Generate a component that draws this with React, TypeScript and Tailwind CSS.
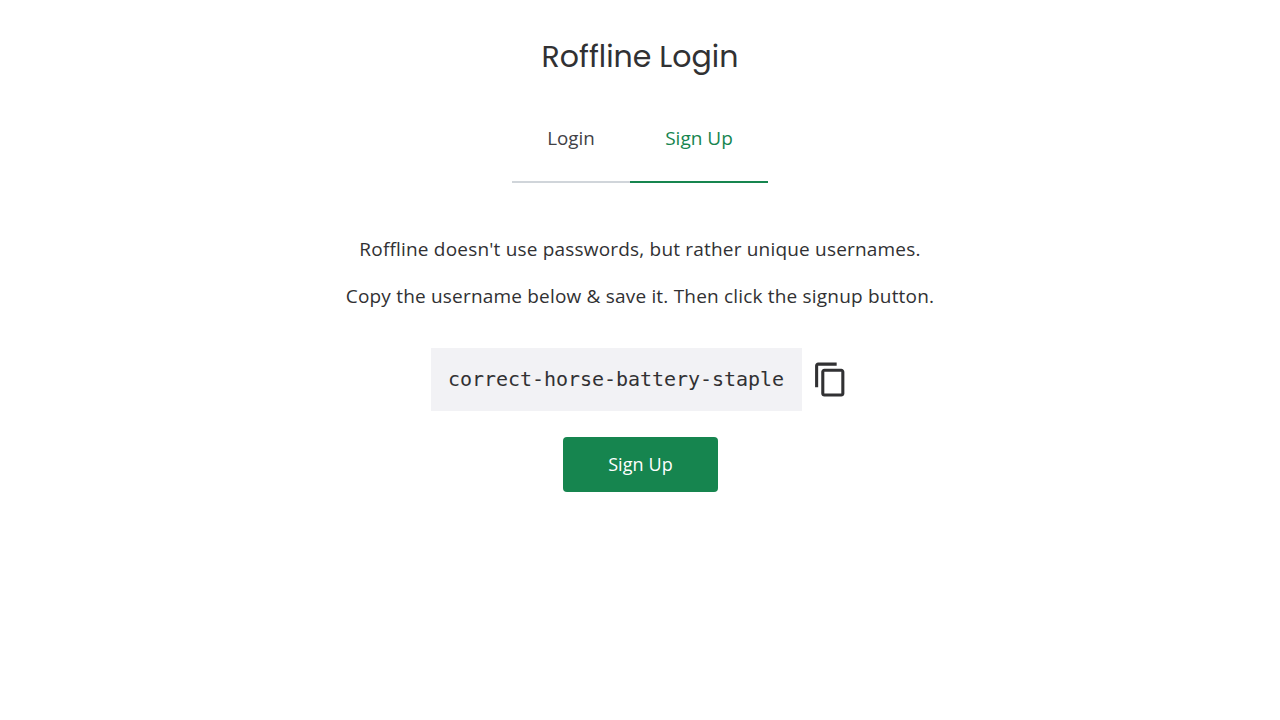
export default function App() {
  return (
    <main className="flex min-h-screen flex-col items-center bg-white font-['Open_Sans',sans-serif] text-[19px] text-[#313133]">
      <h1 className="mt-[33px] h-[48px] font-['Poppins','Inter',sans-serif] text-[30px] leading-[48px] whitespace-nowrap">Roffline Login</h1>
      <nav className="mt-[13px] flex h-[89px] w-[256px]">
        <button className="w-[118px] border-b-2 border-[#d0d5da] pt-[2px] text-[18.8px] text-[#414146]">Login</button>
        <button className="w-[138px] border-b-2 border-[#16854f] pt-[2px] text-[#16854f]">Sign Up</button>
      </nav>
      <p className="mt-[52px] leading-[28px] tracking-[0.19px] whitespace-nowrap">Roffline doesn't use passwords, but rather unique usernames.</p>
      <p className="mt-[19px] leading-[28px] tracking-[0.19px] whitespace-nowrap">Copy the username below &amp; save it. Then click the signup button.</p>
      <div className="mt-[38px] flex items-center">
        <code className="flex h-[63px] w-[371px] items-center justify-center bg-[#f2f2f5] pb-[2px] font-['DejaVu_Sans_Mono',monospace] text-[20px] tracking-[-0.04px]">correct-horse-battery-staple</code>
        <svg className="mr-[1px] ml-[10px] h-[37px] w-[37px]" viewBox="0 0 24 24" fill="currentColor"><path d="M16 1H4c-1.1 0-2 .9-2 2v14h2V3h12V1zm3 4H8c-1.1 0-2 .9-2 2v14c0 1.1.9 2 2 2h11c1.1 0 2-.9 2-2V7c0-1.1-.9-2-2-2zm0 16H8V7h11v14z" /></svg>
      </div>
      <button className="mt-[26px] h-[55px] w-[155px] rounded-[4px] bg-[#16854f] pl-[1px] text-[18px] tracking-[0.1px] text-white">Sign Up</button>
    </main>
  );
}
